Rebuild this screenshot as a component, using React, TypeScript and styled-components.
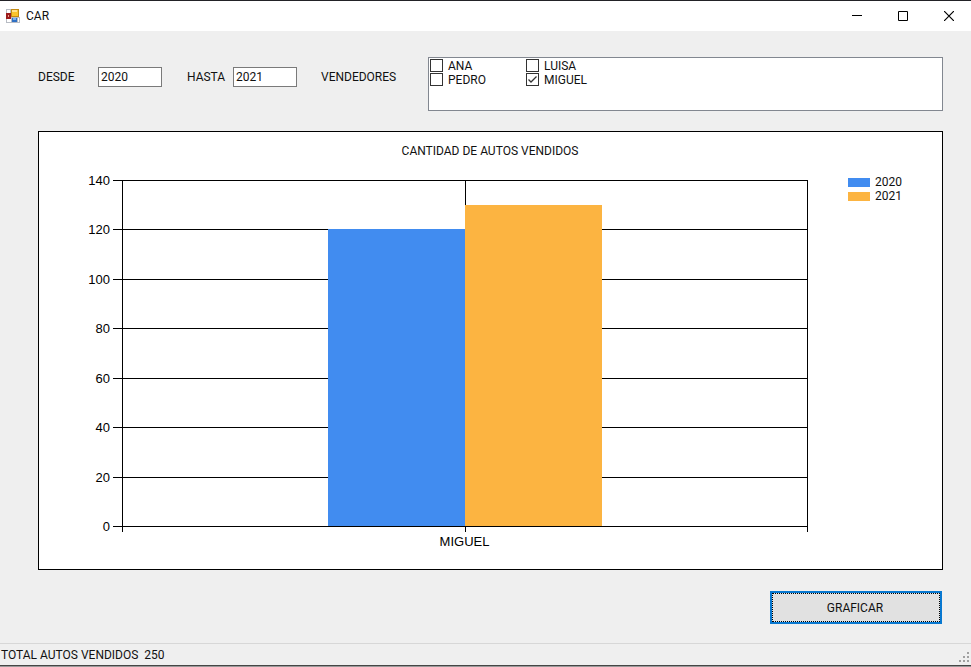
import React, { useState } from "react";
import styled, { createGlobalStyle } from "styled-components";

const GlobalStyle = createGlobalStyle`
  * { box-sizing: border-box; }
  body {
    margin: 0;
    background: #efefef;
    color: #111;
    font: 12px/14px Roboto, "Liberation Sans", sans-serif;
  }
  input, button { font: inherit; color: inherit; }
`;

const Window = styled.div`
  display: flex;
  flex-direction: column;
  min-height: 100vh;
  border-top: 1px solid #222226;
`;

const TitleBar = styled.header`
  display: flex;
  align-items: center;
  height: 30px;
  padding-left: 6px;
  background: #fff;
`;

const Title = styled.h1`
  flex: 1;
  margin: 0 0 0 6px;
  font-size: 12px;
  font-weight: 400;
`;

const CaptionButton = styled.button`
  display: flex;
  align-items: center;
  justify-content: center;
  width: 46px;
  height: 28px;
  padding: 0 0 0 2px;
  border: 0;
  background: transparent;
`;

const Content = styled.main`
  display: flex;
  flex: 1;
  flex-direction: column;
  padding: 26px 28px 19px 38px;
`;

const Filters = styled.form`
  display: flex;
  align-items: flex-start;
  margin-bottom: 20px;
`;

const Field = styled.label<{ $caption: number; $gap: number }>`
  display: grid;
  grid-template-columns: ${(p) => p.$caption}px 64px;
  align-items: center;
  margin: 10px ${(p) => p.$gap}px 0 0;
`;

const YearInput = styled.input`
  width: 64px;
  height: 20px;
  padding: 0 2px;
  border: 1px solid #7a7a7a;
  border-radius: 0;
  background: #fff;
  outline: none;
`;

const ListCaption = styled.span`
  width: 107px;
  margin-top: 13px;
`;

const CheckList = styled.div`
  display: grid;
  flex: 1;
  grid-template-columns: 96px 96px;
  grid-auto-rows: 14px;
  height: 54px;
  padding: 1px;
  border: 1px solid #828790;
  background: #fff;
`;

const CheckItem = styled.label`
  display: flex;
  align-items: flex-start;
  gap: 5px;
`;

const CheckBox = styled.input`
  appearance: none;
  width: 13px;
  height: 13px;
  margin: 0;
  border: 1px solid #333;
  background: #fff;

  &:checked {
    background: #fff url("data:image/svg+xml,%3Csvg xmlns='http://www.w3.org/2000/svg' viewBox='0 0 11 11'%3E%3Cpath d='M1.5 5.5L4 8L9.5 2.5' fill='none' stroke='%23333' stroke-width='1.3'/%3E%3C/svg%3E");
  }
`;

const ChartPanel = styled.section`
  display: flex;
  flex: 1;
  flex-direction: column;
  min-height: 300px;
  padding: 12px 38px 43px 83px;
  border: 1px solid #000;
  background: #fff;
`;

const ChartTitle = styled.h2`
  margin: 0 46px 22px 0;
  font-size: 12px;
  font-weight: 400;
  text-align: center;
`;

const ChartBody = styled.div`
  display: flex;
  flex: 1;
  gap: 41px;
`;

const Plot = styled.svg`
  flex: 1;
  min-width: 0;
  height: auto;
  overflow: visible;
  font: 13px "Liberation Sans", sans-serif;
`;

const Legend = styled.ul`
  width: 56px;
  margin: -5px 0 0;
  padding: 0;
  list-style: none;
`;

const LegendItem = styled.li<{ $color: string }>`
  display: flex;
  align-items: center;
  gap: 5px;

  &::before {
    content: "";
    width: 22px;
    height: 9px;
    background: ${(p) => p.$color};
  }
`;

const PlotButton = styled.button`
  align-self: flex-end;
  width: 172px;
  height: 33px;
  margin: 21px 1px 0 0;
  padding: 0 2px 0 0;
  border: 2px solid #0878d0;
  background: #e1e1e1;
  outline: 1px dotted #000;
  outline-offset: -3px;
`;

const StatusBar = styled.footer`
  display: flex;
  align-items: center;
  justify-content: space-between;
  height: 24px;
  padding-left: 1px;
  border-top: 1px solid #d7d7d7;
  border-bottom: 2px groove #999;
  white-space: pre;
`;

const Grip = styled.svg`
  align-self: flex-end;
  margin: 0 1px 2px 0;
`;

const SERIES = [
  { year: "2020", value: 120, color: "#418cf0" },
  { year: "2021", value: 130, color: "#fcb441" },
];
const MAX = 140;
const TICKS = [0, 20, 40, 60, 80, 100, 120, 140];
const top = (value: number) => `${100 - (value / MAX) * 100}%`;

function AppIcon() {
  return (
    <svg width="14" height="14" viewBox="0 0 14 14" shapeRendering="crispEdges">
      <path d="M0 0h5v14H0zM5 8h9v6H5z" fill="#b8bcc4" />
      <path d="M1 1h3v3H1zM1 10h4v3H1zM12 9h1v4h-1z" fill="#fff" />
      <rect y="4" width="5" height="6" fill="#9c1c1c" />
      <rect x="2" y="6" width="1" height="2" fill="#f0a090" />
      <rect x="5" width="8" height="8" fill="#c28a12" />
      <rect x="6" y="1" width="6" height="6" fill="#fbc42c" />
      <rect x="6" y="1" width="5" height="2" fill="#ffe18a" />
      <rect x="6" y="9" width="5" height="4" fill="#2f70c4" />
      <rect x="7" y="9" width="3" height="2" fill="#79b2ee" />
    </svg>
  );
}

function Chart() {
  return (
    <Plot role="img" aria-label="Cantidad de autos vendidos" shapeRendering="crispEdges">
      {TICKS.map((tick) => (
        <g key={tick}>
          <rect x="0" y={top(tick)} width="100%" height="1" />
          <rect x="-9" y={top(tick)} width="9" height="1" />
          <text x="-12" y={top(tick)} dy="5" textAnchor="end">{tick}</text>
        </g>
      ))}
      {["0%", "50%", "100%"].map((x) => (
        <g key={x}>
          <rect x={x} y="0" width="1" height="100%" />
          <rect x={x} y="100%" width="1" height="6" />
        </g>
      ))}
      {SERIES.map((s, i) => (
        <rect
          key={s.year}
          x={`${30 + i * 20}%`}
          y={top(s.value)}
          width="20%"
          height={`${(s.value / MAX) * 100}%`}
          fill={s.color}
        />
      ))}
      <text x="50%" y="100%" dy="20" textAnchor="middle">MIGUEL</text>
    </Plot>
  );
}

export default function App() {
  const [from, setFrom] = useState("2020");
  const [to, setTo] = useState("2021");

  return (
    <Window>
      <GlobalStyle />
      <TitleBar>
        <AppIcon />
        <Title>CAR</Title>
        <CaptionButton aria-label="Minimizar">
          <svg width="10" height="10"><path d="M0 4.5h10" stroke="#000" /></svg>
        </CaptionButton>
        <CaptionButton aria-label="Maximizar">
          <svg width="10" height="10"><path d="M.5.5h9v9h-9z" fill="none" stroke="#000" /></svg>
        </CaptionButton>
        <CaptionButton aria-label="Cerrar">
          <svg width="10" height="10"><path d="M0 0l10 10M10 0L0 10" stroke="#000" strokeWidth="1.2" /></svg>
        </CaptionButton>
      </TitleBar>
      <Content>
        <Filters>
          <Field $caption={60} $gap={25}>
            DESDE
            <YearInput value={from} onChange={(e) => setFrom(e.target.value)} />
          </Field>
          <Field $caption={46} $gap={24}>
            HASTA
            <YearInput value={to} onChange={(e) => setTo(e.target.value)} />
          </Field>
          <ListCaption id="sellers">VENDEDORES</ListCaption>
          <CheckList role="group" aria-labelledby="sellers">
            {["ANA", "LUISA", "PEDRO", "MIGUEL"].map((name) => (
              <CheckItem key={name}>
                <CheckBox type="checkbox" defaultChecked={name === "MIGUEL"} />
                {name}
              </CheckItem>
            ))}
          </CheckList>
        </Filters>
        <ChartPanel>
          <ChartTitle>CANTIDAD DE AUTOS VENDIDOS</ChartTitle>
          <ChartBody>
            <Chart />
            <Legend>
              {SERIES.map((s) => (
                <LegendItem key={s.year} $color={s.color}>{s.year}</LegendItem>
              ))}
            </Legend>
          </ChartBody>
        </ChartPanel>
        <PlotButton type="button">GRAFICAR</PlotButton>
      </Content>
      <StatusBar>
        <span>TOTAL AUTOS VENDIDOS{"  "}250</span>
        <Grip width="11" height="11" fill="#a0a0a0" shapeRendering="crispEdges">
          <path d="M8 0h2v2h-2zM4 4h2v2h-2zM8 4h2v2h-2zM0 8h2v2h-2zM4 8h2v2h-2zM8 8h2v2h-2z" />
        </Grip>
      </StatusBar>
    </Window>
  );
}
